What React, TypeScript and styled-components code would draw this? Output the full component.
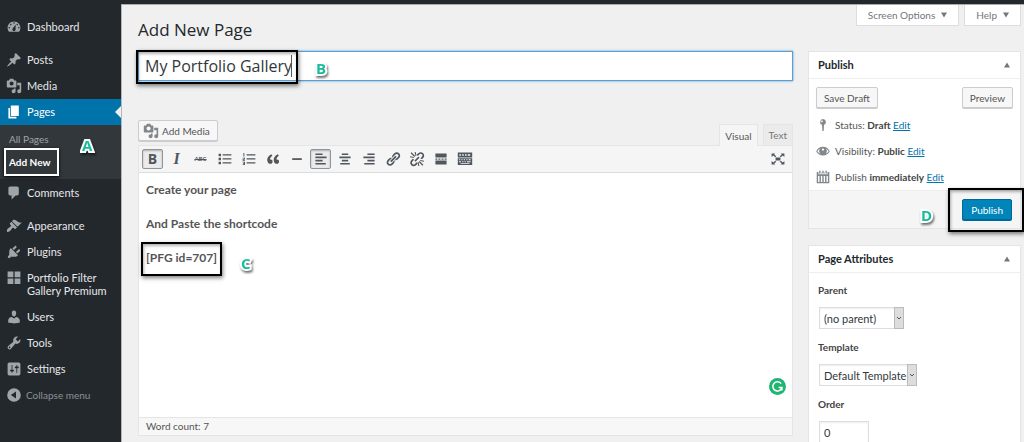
import React from "react";
import styled, { createGlobalStyle, css } from "styled-components";

const GlobalStyle = createGlobalStyle`
  *, *::before, *::after { box-sizing: border-box; }
  html, body { margin: 0; background: #f0f0f0; }
  body, button, input, select {
    font-family: Lato, "Open Sans", sans-serif;
    font-size: 10px;
    color: #444;
  }
  button { cursor: pointer; }
  h1, h2, ul, p { margin: 0; padding: 0; }
  ul { list-style: none; }
`;

/* ---------- icons ---------- */

const Svg = styled.svg<{ $size?: number }>`
  display: block;
  flex: none;
  width: ${(p) => p.$size ?? 16}px;
  height: ${(p) => p.$size ?? 16}px;
  fill: currentColor;
`;

const paths = {
  dashboard:
    "M3.76 16h12.48c1.1-1.37 1.76-3.11 1.76-5 0-4.42-3.58-8-8-8s-8 3.58-8 8c0 1.89.66 3.63 1.76 5zM10 4c.55 0 1 .45 1 1s-.45 1-1 1-1-.45-1-1 .45-1 1-1zM6 6c.55 0 1 .45 1 1s-.45 1-1 1-1-.45-1-1 .45-1 1-1zm8 0c.55 0 1 .45 1 1s-.45 1-1 1-1-.45-1-1 .45-1 1-1zm-5.37 5.55L12 7v6c0 1.1-.9 2-2 2s-2-.9-2-2c0-.57.24-1.08.63-1.45zM4 10c.55 0 1 .45 1 1s-.45 1-1 1-1-.45-1-1 .45-1 1-1zm12 0c.55 0 1 .45 1 1s-.45 1-1 1-1-.45-1-1 .45-1 1-1z",
  posts:
    "M10.44 3.02l1.82-1.82 6.36 6.35-1.83 1.82c-1.05-.68-2.48-.57-3.41.36l-.75.75c-.92.93-1.04 2.35-.35 3.41l-1.83 1.82-2.41-2.41-2.8 2.79c-.42.42-3.38 2.71-3.8 2.29s1.86-3.39 2.28-3.81l2.79-2.79L4.1 9.36l1.83-1.82c1.05.69 2.48.57 3.4-.36l.75-.75c.93-.92 1.05-2.35.36-3.41z",
  media:
    "M13 11V4c0-.55-.45-1-1-1h-1.67L9 1H5L3.67 3H2c-.55 0-1 .45-1 1v7c0 .55.45 1 1 1h10c.55 0 1-.45 1-1zM7 4.5c1.38 0 2.5 1.12 2.5 2.5S8.38 9.5 7 9.5 4.5 8.38 4.5 7 5.62 4.5 7 4.5zM14 6h5v10.5c0 1.38-1.12 2.5-2.5 2.5S14 17.88 14 16.5s1.12-2.5 2.5-2.5c.17 0 .34.02.5.05V9h-3V6zm-4 8.05V13h2v3.5c0 1.38-1.12 2.5-2.5 2.5S7 17.88 7 16.5 8.12 14 9.5 14c.17 0 .34.02.5.05z",
  pages: "M6 15V2h10v13H6zm-1 1h8v2H3V5h2v11z",
  comments:
    "M5 2h9c1.1 0 2 .9 2 2v7c0 1.1-.9 2-2 2h-2l-5 5v-5H5c-1.1 0-2-.9-2-2V4c0-1.1.9-2 2-2z",
  appearance:
    "M14.48 11.06L7.41 3.99l1.5-1.5c.5-.56 2.3-.47 3.51.32 1.21.8 1.43 1.28 2.91 2.1 1.18.64 2.45 1.26 4.45.85zm-.71.71L6.7 4.7 4.93 6.47c-.39.39-.39 1.02 0 1.41l1.06 1.06c.39.39.39 1.03 0 1.42-.6.6-1.43 1.11-2.21 1.69-.35.26-.7.53-1.01.84C1.43 14.23.4 16.08 1.4 17.07c.99 1 2.84-.03 4.18-1.36.31-.31.58-.66.85-1.02.57-.78 1.08-1.61 1.69-2.21.39-.39 1.02-.39 1.41 0l1.06 1.06c.39.39 1.02.39 1.41 0z",
  plugins:
    "M13.11 4.36L9.87 7.6 8 5.73l3.24-3.24c.35-.34 1.05-.2 1.56.32.52.51.66 1.21.31 1.55zm-8 1.77l.91-1.12 9.01 9.01-1.19.84c-.71.71-2.63 1.16-3.82 1.16H6.14L4.9 17.26c-.59.59-1.54.59-2.12 0-.59-.58-.59-1.53 0-2.12l1.24-1.24v-3.88c0-1.13.4-3.19 1.09-3.89zm7.26 3.97l3.24-3.24c.34-.35 1.04-.21 1.55.31.52.51.66 1.21.31 1.55l-3.24 3.25z",
  portfolio: "M2 2h7.2v7H2zM10.8 2H18v7h-7.200zM2 10.600h7.200v7H2zM10.800 10.600H18v7h-7.200z",
  users:
    "M10 9.25c-2.27 0-2.73-3.44-2.73-3.44C7 4.02 7.82 2 9.97 2c2.16 0 2.98 2.02 2.71 3.81 0 0-.41 3.44-2.68 3.44zm0 2.57L12.72 10c2.39 0 4.52 2.33 4.52 4.53v2.49s-3.65 1.13-7.24 1.13c-3.65 0-7.24-1.13-7.24-1.13v-2.49c0-2.25 1.94-4.48 4.47-4.48z",
  tools:
    "M16.68 9.77c-1.34 1.34-3.3 1.67-4.95.99l-5.41 6.52c-.99.99-2.59.99-3.58 0s-.99-2.59 0-3.57l6.52-5.42c-.68-1.65-.35-3.61.99-4.95 1.28-1.28 3.12-1.62 4.72-1.06l-2.89 2.89 2.82 2.82 2.86-2.87c.53 1.58.18 3.39-1.08 4.65zM3.81 16.21c.4.39 1.04.39 1.43 0 .4-.4.4-1.04 0-1.43-.39-.4-1.03-.4-1.43 0-.39.39-.39 1.03 0 1.43z",
  settings:
    "M18 16V4c0-1.100-.9-2-2-2H4c-1.100 0-2 .9-2 2v12c0 1.100.9 2 2 2h12c1.100 0 2-.9 2-2zM8 11h1c.55 0 1 .45 1 1s-.45 1-1 1H8v1.500c0 .28-.22.5-.5.5s-.5-.22-.5-.5V13H6c-.55 0-1-.45-1-1s.45-1 1-1h1V5.500c0-.28.22-.5.5-.5s.5.22.5.5V11zm5-2h-1c-.55 0-1-.45-1-1s.45-1 1-1h1V5.500c0-.28.22-.5.5-.5s.5.22.5.5V7h1c.55 0 1 .45 1 1s-.45 1-1 1h-1v5.500c0 .28-.22.5-.5.5s-.5-.22-.5-.5V9z",
  collapse: "M10 1.500a8.500 8.500 0 1 0 0 17a8.500 8.500 0 0 0 0-17zM12.500 5.500v9L6 10z",
  bullets: "M2 3.500h3v3H2zM7 4h11v1.700H7zM2 8.500h3v3H2zM7 9h11v1.700H7zM2 13.500h3v3H2zM7 14h11v1.700H7z",
  numbers:
    "M3 2.500h1.200v4.500H3zM2 8.300h3v2.200H3.200v.6H5v1H2v-2.200h1.800v-.6H2zM2 13.500h3v4H2v-1h1.800v-.6H2.600v-.9h1.200v-.5H2zM7 4h11v1.700H7zM7 9h11v1.700H7zM7 14h11v1.700H7z",
  quote:
    "M9.490 13.220c0-.74-.2-1.380-.61-1.900-.62-.78-1.830-.88-2.530-.72-.29-1.650 1.110-3.750 2.920-4.650L7.880 4c-2.730 1.300-5.420 4.280-4.960 8.050C3.210 14.430 4.590 16 6.540 16c.85 0 1.560-.25 2.120-.75s.83-1.180.83-2.030zm8.050 0c0-.74-.2-1.380-.61-1.900-.63-.78-1.830-.88-2.530-.72-.29-1.650 1.110-3.750 2.920-4.650L15.930 4c-2.730 1.300-5.410 4.280-4.950 8.050.29 2.380 1.660 3.950 3.610 3.950.85 0 1.560-.25 2.120-.75s.83-1.180.83-2.030z",
  rule: "M4 9h12v2.200H4z",
  alignLeft: "M3 3h9v2H3zM3 7h14v2H3zM3 11h9v2H3zM3 15h13v2H3z",
  alignCenter: "M6 3h8v2H6zM3 7h14v2H3zM6 11h8v2H6zM4 15h12v2H4z",
  alignRight: "M8 3h9v2H8zM3 7h14v2H3zM8 11h9v2H8zM4 15h13v2H4z",
  link: "M17.740 2.760c1.680 1.690 1.680 4.410 0 6.100l-1.530 1.520c-1.120 1.120-2.700 1.470-4.140 1.090l2.620-2.610.76-.77.76-.76c.84-.84.84-2.200 0-3.040-.84-.85-2.200-.85-3.040 0l-.77.76-3.380 3.380c-.37-1.440-.02-3.020 1.100-4.140l1.520-1.530c1.690-1.680 4.420-1.680 6.100 0zM8.590 13.430l5.340-5.340c.42-.42.42-1.100 0-1.520-.44-.43-1.130-.39-1.530 0l-5.330 5.340c-.42.42-.42 1.100 0 1.520.44.43 1.130.39 1.520 0zm-.76 2.290l4.140-4.150c.38 1.440.03 3.020-1.090 4.140l-1.520 1.530c-1.690 1.680-4.410 1.680-6.100 0-1.680-1.680-1.680-4.420 0-6.100l1.530-1.520c1.120-1.120 2.700-1.470 4.140-1.100l-4.140 4.150c-.85.84-.85 2.200 0 3.050.84.84 2.200.84 3.040 0z",
  unlink:
    "M17.740 2.760c1.680 1.690 1.680 4.410 0 6.100l-1.530 1.520-2-1.200 2-2.080c.84-.84.84-2.200 0-3.040-.84-.85-2.200-.85-3.040 0l-2.200 2.200-1.400-1.800 2.070-1.700c1.690-1.680 4.420-1.680 6.100 0zM2.800 17.700c-1.680-1.680-1.680-4.420 0-6.100l1.900-1.900 1.700 1.300-2.100 2.200c-.85.84-.85 2.200 0 3.050.84.84 2.200.84 3.040 0l2.100-2.100 1.500 1.500-2.040 2.050c-1.690 1.680-4.410 1.680-6.100 0zM6.800 12l5-5 1.300 1.300-5 5zM2 2.800L3.200 1.600l4.600 4.800-1 1zM1.500 6.500l4.500 1v1.400l-4.800-1zM7 1.200h1.400l.9 4.600-1.200.3zM18 17.200l-1.200 1.200-4.600-4.800 1-1zM18.500 13.500l-4.500-1v-1.400l4.800 1zM13 18.800h-1.400l-.9-4.600 1.200-.3z",
  more: "M3 3h14v5H3zM3 9.300h2.500v1.500H3zM6.800 9.300h2.500v1.500H6.800zM10.700 9.300h2.500v1.500h-2.500zM14.500 9.300H17v1.500h-2.500zM3 12h14v5H3z",
  kitchen:
    "M1 2h18v6H1zm2 2v2h2V4zm3.500 0v2h2V4zM10 4v2h2V4zm3.500 0v2h3V4zM1 9h18v8.500H1zm1.500 1.300v1.300H4v-1.300zm3 0v1.300H7v-1.300zm3 0v1.300H10v-1.300zm3 0v1.300H13v-1.300zm3 0v1.300h2.500v-1.300zM2.500 12.800v1.300H5v-1.300zm4 0v1.300H8v-1.300zm3 0v1.300H11v-1.300zm3 0v1.300H17v-1.300zM4.500 15.200v1.100h11v-1.100z",
  expand:
    "M7 8h6v4H7zM2 3h4.500L5.300 4.300l2.500 2.200-1.200 1.200L4 5.500 2 7.500zM18 3v4.500l-2-2-2.600 2.200-1.200-1.200 2.500-2.200L13.500 3zM2 17v-4.500l2 2 2.600-2.200 1.200 1.200-2.500 2.200L6.500 17zM18 17h-4.500l1.200-1.300-2.500-2.200 1.200-1.200 2.600 2.200 2-2z",
  pin: "M10 1.500a4.300 4.300 0 0 1 1.400 8.300L10.900 18.500H9.100L8.600 9.800A4.300 4.300 0 0 1 10 1.500zM8.800 3.600a1.300 1.300 0 1 0 .1 2.500a1.300 1.300 0 0 0-.1-2.500z",
  eye: "M10 4C5.500 4 2 6.800.3 10.200 2 13.700 5.500 16.300 10 16.300s8-2.600 9.700-6.100C18 6.800 14.500 4 10 4zm-3.800 2.300A5 5 0 0 0 6.300 14C4.400 13.200 2.900 11.900 1.900 10.200c1-1.700 2.500-3.100 4.300-3.900zm7.600 0c1.800.8 3.300 2.200 4.300 3.900-1 1.700-2.500 3-4.400 3.800a5 5 0 0 0 .1-7.700zM10 6.300c.9 0 1.600.7 1.600 1.600S10.900 9.500 10 9.500 8.400 8.800 8.400 7.900 9.100 6.300 10 6.300z",
  calendar:
    "M4.500 1h2v4h-2zM9 1h2v4H9zM13.500 1h2v4h-2zM1 3h2.500v3H7.500V3H8v3h4V3h.5v3h4V3H19v16H1zm2 5.500V17h2V8.500zm4 0V17h2V8.500zm4 0V17h2V8.500zm4 0V17h2V8.500z",
};

type IconName = keyof typeof paths;

const Icon = ({ name, size }: { name: IconName; size?: number }) => (
  <Svg viewBox="0 0 20 20" $size={size} aria-hidden="true">
    <path fillRule="evenodd" d={paths[name]} />
  </Svg>
);

const Triangle = ({ up }: { up?: boolean }) => (
  <Svg viewBox="0 0 8 8" $size={8} aria-hidden="true">
    <path d={up ? "M4 1.500L7 6.500H1z" : "M1 1.500h6L4 6.500z"} />
  </Svg>
);

/* ---------- shell ---------- */

const Shell = styled.div`
  height: 100vh;
  overflow: hidden;
  display: flex;
  flex-direction: column;
`;

const AdminBar = styled.header`
  flex: none;
  height: 4px;
  background: #23282d;
`;

const Body = styled.div`
  flex: 1;
  min-height: 0;
  display: flex;
`;

const Sidebar = styled.nav`
  flex: none;
  width: 121px;
  padding-top: 10px;
  background: #23282d;
  box-shadow: 1px 0 0 #b4b6b8;
`;

const MenuLink = styled.a<{ $active?: boolean }>`
  position: relative;
  display: flex;
  align-items: flex-start;
  gap: 5px;
  padding: 5px 8px 5px 6px;
  font-size: 11px;
  line-height: 16px;
  color: ${(p) => (p.$active ? "#fff" : "#e6e7e8")};
  background: ${(p) => (p.$active ? "#0073aa" : "transparent")};
  text-decoration: none;

  svg {
    color: ${(p) => (p.$active ? "#fff" : "#a0a5aa")};
  }

  ${(p) =>
    p.$active &&
    css`
      &::after {
        content: "";
        position: absolute;
        right: 0;
        top: 7px;
        border: 6px solid transparent;
        border-left-width: 0;
        border-right-color: #f0f0f0;
      }
    `}
`;

const TwoLine = styled.span`
  padding: 1px 0 2px;
  line-height: 13px;
  white-space: nowrap;
`;

const MenuGap = styled.li`
  height: 7px;
`;

const Submenu = styled.ul`
  padding: 5px 4px 3px;
  margin-bottom: 1px;
  background: #32373c;
`;

const SubLink = styled.a<{ $current?: boolean }>`
  display: block;
  width: fit-content;
  padding: 0 5px;
  line-height: 18px;
  color: #a0a5aa;
  text-decoration: none;
  white-space: nowrap;
  ${(p) =>
    p.$current &&
    css`
      padding: 3px 7px 3px 3px;
      border: 2px solid #fff;
      box-shadow: 0 1px 3px #000;
      font-weight: 700;
      color: #fff;
    `}
`;

const CollapseButton = styled.button`
  display: flex;
  align-items: center;
  gap: 4px;
  width: 100%;
  height: 26px;
  padding: 0 6px;
  border: 0;
  background: none;
  color: #8c9196;
  white-space: nowrap;

  svg {
    color: #a0a5aa;
  }
`;

/* ---------- annotations ---------- */

const Marker = styled.span<{ $x: number; $y: number }>`
  position: absolute;
  left: ${(p) => p.$x}px;
  top: ${(p) => p.$y}px;
  font-family: "Open Sans", sans-serif;
  font-size: 15px;
  line-height: 20px;
  font-weight: 700;
  color: #1abc9c;
  -webkit-text-stroke: 4px #fff;
  paint-order: stroke fill;
  filter: drop-shadow(1px 2px 1px rgba(0, 0, 0, 0.55));
  pointer-events: none;
  z-index: 2;
`;

const frame = css`
  border: 2px solid #000;
  box-shadow: 1px 2px 4px rgba(0, 0, 0, 0.5), inset 1px 2px 3px rgba(0, 0, 0, 0.3);
  pointer-events: none;
`;

const Anchor = styled.div`
  position: relative;
`;

/* ---------- main ---------- */

const Main = styled.main`
  flex: 1;
  min-width: 0;
  padding: 0 3px 0 17px;
  border-top: 1px solid #a9abad;
`;

const TopRow = styled.div`
  display: flex;
  justify-content: space-between;
  height: 46px;
`;

const Heading = styled.h1`
  padding-top: 13px;
  font-family: "Open Sans", sans-serif;
  font-size: 17px;
  line-height: 24px;
  font-weight: 400;
  color: #23282d;
`;

const ScreenLinks = styled.div`
  display: flex;
  align-items: flex-start;
  gap: 5px;
`;

const ScreenButton = styled.button`
  display: flex;
  align-items: center;
  gap: 5px;
  height: 21px;
  padding: 0 10px 0 11px;
  border: 1px solid #ddd;
  border-top: 0;
  background: #fff;
  color: #72777c;
`;

const Columns = styled.div`
  display: flex;
  align-items: flex-start;
  gap: 15px;
`;

const EditorColumn = styled.div`
  flex: 1;
  min-width: 0;
`;

const TitleWrap = styled(Anchor)`
  margin-bottom: 39px;
`;

const TitleInput = styled.input`
  display: block;
  width: 100%;
  height: 30px;
  padding: 0 6px;
  border: 1px solid #5b9dd9;
  box-shadow: 0 0 2px rgba(30, 140, 190, 0.8);
  background: #fff;
  font-family: "Open Sans", sans-serif;
  font-size: 16px;
  color: #32373c;
  outline: none;
`;

const TitleFrame = styled.div`
  ${frame}
  position: absolute;
  left: -2px;
  top: -1px;
  width: 162px;
  height: 34px;
`;

const Caret = styled.span`
  position: absolute;
  left: 153px;
  top: 4px;
  width: 1px;
  height: 22px;
  background: #555;
`;

const MediaRow = styled.div`
  display: flex;
  justify-content: space-between;
  align-items: flex-start;
  height: 25px;
`;

const Button = styled.button<{ $primary?: boolean }>`
  display: inline-flex;
  align-items: center;
  gap: 3px;
  height: 21px;
  padding: 0 ${(p) => (p.$primary ? 8 : 7)}px;
  border: 1px solid ${(p) => (p.$primary ? "#006799" : "#ccc")};
  border-radius: 2px;
  background: ${(p) => (p.$primary ? "#0085ba" : "#f7f7f7")};
  box-shadow: 0 1px 0 ${(p) => (p.$primary ? "#006799" : "#ccc")};
  color: ${(p) => (p.$primary ? "#fff" : "#555")};
  white-space: nowrap;

  svg {
    margin-left: -3px;
    color: #82878c;
  }
`;

const Tabs = styled.div`
  display: flex;
  gap: 5px;
  padding-top: 4px;
`;

const Tab = styled.button<{ $active?: boolean }>`
  position: relative;
  z-index: 1;
  height: ${(p) => (p.$active ? 22 : 21)}px;
  padding: 0 5px;
  border: 1px solid #e5e5e5;
  border-bottom: 0;
  background: ${(p) => (p.$active ? "#f5f5f5" : "#ebebeb")};
  color: ${(p) => (p.$active ? "#555" : "#777")};
`;

const EditorBox = styled.section`
  border: 1px solid #e5e5e5;
  background: #fff;
`;

const Toolbar = styled.div`
  display: flex;
  align-items: center;
  gap: 3px;
  height: 27px;
  padding: 0 3px;
  border-bottom: 1px solid #ddd;
  background: #f5f5f5;
`;

const ToolButton = styled.button<{ $on?: boolean }>`
  display: flex;
  align-items: center;
  justify-content: center;
  width: 21px;
  height: 20px;
  padding: 0;
  border: 1px solid ${(p) => (p.$on ? "#8f959b" : "transparent")};
  border-radius: 2px;
  background: ${(p) => (p.$on ? "#ebebeb" : "transparent")};
  box-shadow: ${(p) => (p.$on ? "inset 0 1px 2px rgba(0,0,0,.25)" : "none")};
  color: #50575e;
  line-height: 16px;

  &:last-child {
    margin-left: auto;
    margin-right: 1px;
  }
`;

const BoldGlyph = styled.b`
  font-family: "Open Sans", sans-serif;
  font-size: 14px;
`;

const ItalicGlyph = styled.i`
  font-family: "Liberation Serif", serif;
  font-size: 16px;
  font-weight: 700;
`;

const StrikeGlyph = styled.s`
  font-size: 6px;
  font-weight: 700;
`;

const Canvas = styled(Anchor)`
  height: 244px;
  padding: 8px 7px;
  font-size: 12px;
  line-height: 18px;
  font-weight: 700;
  color: #555;

  p + p {
    margin-top: 16px;
  }
`;

const Typing = styled.div`
  outline: none;
`;

const ShortcodeFrame = styled.div`
  ${frame}
  position: absolute;
  left: 2px;
  top: 69px;
  width: 81px;
  height: 34px;
`;

const Assistant = styled.button`
  position: absolute;
  right: 6px;
  bottom: 22px;
  width: 17px;
  height: 17px;
  padding: 0;
  border: 0;
  background: none;
`;

const StatusLine = styled.div`
  height: 18px;
  padding: 0 7px;
  border-top: 1px solid #e5e5e5;
  background: #f7f7f7;
  line-height: 17px;
  color: #555;
`;

/* ---------- side panels ---------- */

const PanelColumn = styled.aside`
  flex: none;
  width: 213px;
  display: flex;
  flex-direction: column;
  gap: 16px;
`;

const Panel = styled.section`
  border: 1px solid #e5e5e5;
  background: #fff;
`;

const PanelHead = styled.header`
  display: flex;
  align-items: center;
  justify-content: space-between;
  height: 27px;
  padding: 0 9px;
  border-bottom: 1px solid #eee;
  color: #72777c;
`;

const PanelTitle = styled.h2`
  font-size: 11px;
  line-height: 16px;
  font-weight: 700;
  color: #23282d;
`;

const ToggleButton = styled.button`
  padding: 0;
  border: 0;
  background: none;
  color: inherit;
`;

const DraftRow = styled.div`
  display: flex;
  justify-content: space-between;
  padding: 8px 7px 4px;
`;

const MetaRow = styled.div`
  display: flex;
  align-items: center;
  gap: 5px;
  height: 26px;
  padding: 0 7px;
  color: #555;
  white-space: nowrap;

  svg {
    color: #82878c;
  }
  b {
    font-weight: 700;
    color: #444;
  }
  a {
    color: #0073aa;
  }
`;

const PublishBar = styled(Anchor)`
  display: flex;
  justify-content: flex-end;
  padding: 8px;
  border-top: 1px solid #eee;
  background: #f5f5f5;
`;

const PublishFrame = styled.div`
  ${frame}
  position: absolute;
  right: -4px;
  top: -3px;
  width: 76px;
  height: 44px;
`;

const Fields = styled.div`
  display: flex;
  flex-direction: column;
  align-items: flex-start;
  padding: 9px;
`;

const FieldLabel = styled.label`
  font-weight: 700;
  line-height: 16px;
  color: #444;
`;

const SelectWrap = styled.div<{ $width: number }>`
  display: flex;
  position: relative;
  width: ${(p) => p.$width}px;
  height: 22px;
  margin: 9px 1px 10px;
`;

const Select = styled.select`
  appearance: none;
  width: 100%;
  padding: 0 4px;
  border: 1px solid #ddd;
  border-radius: 0;
  background: #fff;
  box-shadow: inset 0 1px 2px rgba(0, 0, 0, 0.07);
  font-size: 11px;
  color: #32373c;
`;

const SelectArrow = styled.span`
  position: absolute;
  right: 0;
  top: 0;
  bottom: 0;
  width: 10px;
  display: flex;
  align-items: center;
  justify-content: center;
  border: 1px solid #bbb;
  background: #ddd;
  pointer-events: none;
`;

const OrderInput = styled.input`
  width: 50px;
  height: 22px;
  margin: 9px 1px;
  padding: 0 4px;
  border: 1px solid #ddd;
  box-shadow: inset 0 1px 2px rgba(0, 0, 0, 0.07);
  font-size: 11px;
  color: #32373c;
`;

/* ---------- composition ---------- */

const MenuItem = ({
  icon,
  active,
  children,
}: {
  icon: IconName;
  active?: boolean;
  children: React.ReactNode;
}) => (
  <MenuLink href="#" $active={active}>
    <Icon name={icon} />
    {children}
  </MenuLink>
);

const PanelHeader = ({ title }: { title: string }) => (
  <PanelHead>
    <PanelTitle>{title}</PanelTitle>
    <ToggleButton aria-label={`Toggle ${title}`}>
      <Triangle up />
    </ToggleButton>
  </PanelHead>
);

const SelectField = ({
  id,
  label,
  value,
  width,
}: {
  id: string;
  label: string;
  value: string;
  width: number;
}) => (
  <>
    <FieldLabel htmlFor={id}>{label}</FieldLabel>
    <SelectWrap $width={width}>
      <Select id={id}>
        <option>{value}</option>
      </Select>
      <SelectArrow>
        <Svg viewBox="0 0 6 6" $size={6} aria-hidden="true">
          <path d="M1 2l2 2 2-2" fill="none" stroke="#555" />
        </Svg>
      </SelectArrow>
    </SelectWrap>
  </>
);

const tools: { name: IconName; label: string; on?: boolean }[] = [
  { name: "bullets", label: "Bulleted list" },
  { name: "numbers", label: "Numbered list" },
  { name: "quote", label: "Blockquote" },
  { name: "rule", label: "Horizontal line" },
  { name: "alignLeft", label: "Align left", on: true },
  { name: "alignCenter", label: "Align center" },
  { name: "alignRight", label: "Align right" },
  { name: "link", label: "Insert link" },
  { name: "unlink", label: "Remove link" },
  { name: "more", label: "Read more" },
  { name: "kitchen", label: "Toolbar toggle" },
  { name: "expand", label: "Distraction-free mode" },
];

export default function App() {
  return (
    <Shell>
      <GlobalStyle />
      <AdminBar />
      <Body>
        <Sidebar aria-label="Main menu">
          <ul>
            <li><MenuItem icon="dashboard">Dashboard</MenuItem></li>
            <MenuGap role="separator" />
            <li><MenuItem icon="posts">Posts</MenuItem></li>
            <li><MenuItem icon="media">Media</MenuItem></li>
            <li>
              <MenuItem icon="pages" active>Pages</MenuItem>
              <Anchor>
                <Submenu>
                  <li><SubLink href="#">All Pages</SubLink></li>
                  <li><SubLink href="#" $current>Add New</SubLink></li>
                </Submenu>
                <Marker $x={82} $y={10}>A</Marker>
              </Anchor>
            </li>
            <li><MenuItem icon="comments">Comments</MenuItem></li>
            <MenuGap role="separator" />
            <li><MenuItem icon="appearance">Appearance</MenuItem></li>
            <li><MenuItem icon="plugins">Plugins</MenuItem></li>
            <li>
              <MenuItem icon="portfolio">
                <TwoLine>Portfolio Filter<br />Gallery Premium</TwoLine>
              </MenuItem>
            </li>
            <li><MenuItem icon="users">Users</MenuItem></li>
            <li><MenuItem icon="tools">Tools</MenuItem></li>
            <li><MenuItem icon="settings">Settings</MenuItem></li>
            <li>
              <CollapseButton>
                <Icon name="collapse" />
                Collapse menu
              </CollapseButton>
            </li>
          </ul>
        </Sidebar>

        <Main>
          <TopRow>
            <Heading>Add New Page</Heading>
            <ScreenLinks>
              <ScreenButton>Screen Options <Triangle /></ScreenButton>
              <ScreenButton>Help <Triangle /></ScreenButton>
            </ScreenLinks>
          </TopRow>

          <Columns>
            <EditorColumn>
              <TitleWrap>
                <TitleInput aria-label="Page title" defaultValue="My Portfolio Gallery" />
                <TitleFrame />
                <Caret />
                <Marker $x={178} $y={7}>B</Marker>
              </TitleWrap>

              <MediaRow>
                <Button><Icon name="media" />Add Media</Button>
                <Tabs>
                  <Tab $active>Visual</Tab>
                  <Tab>Text</Tab>
                </Tabs>
              </MediaRow>

              <EditorBox>
                <Toolbar>
                  <ToolButton $on aria-label="Bold"><BoldGlyph>B</BoldGlyph></ToolButton>
                  <ToolButton aria-label="Italic"><ItalicGlyph>I</ItalicGlyph></ToolButton>
                  <ToolButton aria-label="Strikethrough"><StrikeGlyph>ABC</StrikeGlyph></ToolButton>
                  {tools.map((t) => (
                    <ToolButton key={t.name} $on={t.on} aria-label={t.label}>
                      <Icon name={t.name} />
                    </ToolButton>
                  ))}
                </Toolbar>
                <Canvas>
                  <Typing role="textbox" aria-label="Page content" aria-multiline="true" contentEditable suppressContentEditableWarning spellCheck={false}>
                    <p>Create your page</p>
                    <p>And Paste the shortcode</p>
                    <p>[PFG id=707]</p>
                  </Typing>
                  <ShortcodeFrame />
                  <Marker $x={102} $y={80}>C</Marker>
                  <Assistant aria-label="Writing assistant">
                    <Svg viewBox="0 0 20 20" $size={17} aria-hidden="true">
                      <circle cx="10" cy="10" r="10" fill="#20b573" />
                      <path
                        d="M14.200 6.600A5.400 5.400 0 1 0 15.200 11.200H11.300M15.200 11v3.600"
                        fill="none"
                        stroke="#fff"
                        strokeWidth="1.800"
                      />
                    </Svg>
                  </Assistant>
                </Canvas>
                <StatusLine>Word count: 7</StatusLine>
              </EditorBox>
            </EditorColumn>

            <PanelColumn>
              <Panel>
                <PanelHeader title="Publish" />
                <DraftRow>
                  <Button>Save Draft</Button>
                  <Button>Preview</Button>
                </DraftRow>
                <MetaRow>
                  <Icon name="pin" size={14} />
                  <span>Status: <b>Draft</b> <a href="#">Edit</a></span>
                </MetaRow>
                <MetaRow>
                  <Icon name="eye" size={14} />
                  <span>Visibility: <b>Public</b> <a href="#">Edit</a></span>
                </MetaRow>
                <MetaRow>
                  <Icon name="calendar" size={14} />
                  <span>Publish <b>immediately</b> <a href="#">Edit</a></span>
                </MetaRow>
                <PublishBar>
                  <Button $primary>Publish</Button>
                  <PublishFrame />
                  <Marker $x={112} $y={14}>D</Marker>
                </PublishBar>
              </Panel>

              <Panel>
                <PanelHeader title="Page Attributes" />
                <Fields>
                  <SelectField id="parent" label="Parent" value="(no parent)" width={85} />
                  <SelectField id="template" label="Template" value="Default Template" width={98} />
                  <FieldLabel htmlFor="order">Order</FieldLabel>
                  <OrderInput id="order" defaultValue="0" />
                </Fields>
              </Panel>
            </PanelColumn>
          </Columns>
        </Main>
      </Body>
    </Shell>
  );
}
